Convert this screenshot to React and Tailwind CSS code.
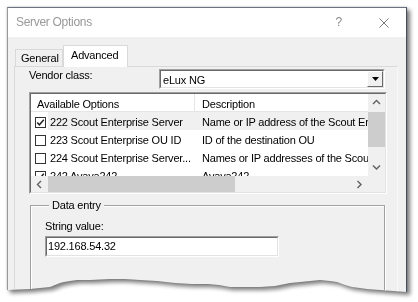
// App.jsx — "Server Options" dialog, Advanced tab (torn-edge screenshot)

const rows = [
  { checked: true,  name: '222 Scout Enterprise Server',    desc: 'Name or IP address of the Scout Enterprise Server', selected: true },
  { checked: false, name: '223 Scout Enterprise OU ID',     desc: 'ID of the destination OU' },
  { checked: false, name: '224 Scout Enterprise Server...', desc: 'Names or IP addresses of the Scout Enterprise Servers' },
  { checked: true,  name: '242 Avaya242',                   desc: 'Avaya242' },
]

// small scrollbar chevron
function Chevron({ dir }) {
  const pts = {
    up:    '1,5 4.5,1.5 8,5',
    down:  '1,1.5 4.5,5 8,1.5',
    left:  '5,1 1.5,4.5 5,8',
    right: '1.5,1 5,4.5 1.5,8',
  }[dir]
  const vertical = dir === 'up' || dir === 'down'
  return (
    <svg width={vertical ? 9 : 7} height={vertical ? 7 : 9} viewBox={vertical ? '0 0 9 7' : '0 0 7 9'}>
      <polyline points={pts} fill="none" stroke="#606060" strokeWidth="1.4" />
    </svg>
  )
}

function Checkbox({ checked }) {
  return (
    <div className="w-[11px] h-[11px] border border-[#333] bg-white flex items-center justify-center shrink-0">
      {checked && (
        <svg width="9" height="9" viewBox="0 0 9 9">
          <polyline points="1.2,4.4 3.4,6.8 7.8,1.8" fill="none" stroke="#222" strokeWidth="1.5" />
        </svg>
      )}
    </div>
  )
}

// classic sunken 3D frame
function Sunken({ className = '', children }) {
  return (
    <div className={`border border-t-[#a0a0a0] border-l-[#a0a0a0] border-r-white border-b-white ${className}`}>
      <div className="w-full h-full border border-t-[#696969] border-l-[#696969] border-r-[#e3e3e3] border-b-[#e3e3e3] bg-white overflow-hidden">
        {children}
      </div>
    </div>
  )
}

export default function App() {
  return (
    <div className="w-[418px] h-[302px] bg-white overflow-hidden pl-[7px] pt-[7px] text-[11px] leading-[13px] tracking-[-0.2px] text-black [font-family:'Liberation_Sans',Arial,sans-serif]">

      {/* shadow wrapper follows the torn clip */}
      <div className="w-[400px] [filter:drop-shadow(3px_3px_2px_rgba(0,0,0,0.45))_drop-shadow(0_0_1px_rgba(0,0,0,0.25))]">
        <div className="w-[400px] h-[292px] bg-[#f0f0f0] border border-[#9a9a9a] border-r-[#44505c] border-t-[#6a7480] flex flex-col [clip-path:polygon(0_0,400px_0,400px_285px,373px_283px,360px_282px,353px_281px,345px_280px,338px_278px,330px_275px,323px_274px,313px_273px,303px_274px,293px_275px,283px_276px,268px_279px,253px_280px,238px_280px,223px_280px,212px_278px,201px_277px,185px_277px,168px_276px,150px_274px,133px_273px,118px_272px,103px_272px,83px_273px,70px_273px,63px_274px,57px_275px,53px_276px,48px_278px,43px_280px,33px_281px,23px_282px,0_283px)]">

          {/* ── Title bar ───────────────────────────── */}
          <div className="h-[29px] bg-white flex items-center pl-[8px] shrink-0">
            <span className="text-[12px] tracking-[-0.3px] text-[#999]">Server Options</span>
            <span className="ml-auto text-[12px] text-[#8a8a8a]">?</span>
            <svg className="ml-[37px] mr-[17px] mt-[1px]" width="10" height="10" viewBox="0 0 10 10">
              <path d="M0.5 0.5 L9.5 9.5 M9.5 0.5 L0.5 9.5" stroke="#7a7a7a" strokeWidth="1" />
            </svg>
          </div>

          {/* ── Body ────────────────────────────────── */}
          <div className="pl-[6px] pt-[8px]">

            {/* Tabs */}
            <div className="flex items-end h-[21px] pl-[1px]">
              <div className="w-[48px] h-[17px] border border-b-0 border-[#d9d9d9] bg-[#f0f0f0] pl-[5px] pt-[2px]">General</div>
              <div className="w-[65px] h-[22px] -mb-px border border-b-0 border-[#d9d9d9] bg-white pl-[7px] pt-[3px] relative z-10">Advanced</div>
            </div>

            {/* Tab page */}
            <div className="w-[384px] h-[240px] border border-[#d9d9d9] border-r-[#f8f8f8] pt-[2px]">

              {/* Vendor class */}
              <div className="flex h-[20px]">
                <div className="w-[144px] pl-[14px]">Vendor class:</div>
                <Sunken className="w-[226px] h-[20px]">
                  <div className="h-full flex items-start">
                    <span className="pl-[2px] pt-[3px] flex-1">eLux NG</span>
                    <div className="w-[16px] h-[16px] border border-t-white border-l-white border-r-[#696969] border-b-[#696969] bg-[#f0f0f0] flex items-center justify-center">
                      <svg width="7" height="4" viewBox="0 0 7 4"><polygon points="0,0 7,0 3.5,4" fill="#000" /></svg>
                    </div>
                  </div>
                </Sunken>
              </div>

              {/* Options list */}
              <Sunken className="ml-[14px] mt-[3px] w-[358px] h-[102px]">
                <div className="flex h-[82px]">
                  <div className="w-[337px] overflow-hidden">
                    {/* header */}
                    <div className="flex h-[18px] border-b border-[#e5e5e5] whitespace-nowrap">
                      <div className="w-[164px] shrink-0 border-r border-[#e5e5e5] pl-[6px] pt-[4px]">Available Options</div>
                      <div className="pl-[7px] pt-[4px]">Description</div>
                    </div>
                    {/* rows */}
                    {rows.map(r => (
                      <div key={r.name} className="flex h-[18px] whitespace-nowrap">
                        <div className="pl-[4px] pt-[5px] w-[17px] shrink-0">
                          <Checkbox checked={r.checked} />
                        </div>
                        <div className={`flex flex-1 ${r.selected ? 'bg-[#f0f0f0]' : ''}`}>
                          <div className="w-[148px] shrink-0 pl-[2px] pt-[4px] overflow-hidden">{r.name}</div>
                          <div className="pl-[6px] pt-[4px]">{r.desc}</div>
                        </div>
                      </div>
                    ))}
                  </div>

                  {/* vertical scrollbar */}
                  <div className="w-[17px] bg-[#f0f0f0] flex flex-col">
                    <div className="h-[17px] flex items-center justify-center"><Chevron dir="up" /></div>
                    <div className="h-[35px] mt-[1px] bg-[#cdcdcd]" />
                    <div className="flex-1" />
                    <div className="h-[17px] flex items-center justify-center"><Chevron dir="down" /></div>
                  </div>
                </div>

                {/* horizontal scrollbar */}
                <div className="flex h-[16px]">
                  <div className="w-[337px] bg-[#f0f0f0] flex">
                    <div className="w-[17px] flex items-center justify-center"><Chevron dir="left" /></div>
                    <div className="w-[187px] bg-[#cdcdcd]" />
                    <div className="flex-1" />
                    <div className="w-[17px] flex items-center justify-center"><Chevron dir="right" /></div>
                  </div>
                  <div className="w-[17px] bg-[#f0f0f0]" />
                </div>
              </Sunken>

              {/* Data entry group */}
              <fieldset className="ml-[15px] mt-[5px] w-[355px] h-[110px] border border-[#a0a0a0] shadow-[inset_1px_1px_0_#fff,1px_1px_0_#fff] pl-[14px]">
                <legend className="ml-[4px] px-[3px] bg-[#f0f0f0]">Data entry</legend>
                <div className="mt-[8px]">String value:</div>
                <Sunken className="mt-[3px] w-[234px] h-[21px]">
                  <div className="pl-[1px] pt-[2px]">192.168.54.32</div>
                </Sunken>
              </fieldset>
            </div>
          </div>
        </div>
      </div>
    </div>
  )
}
